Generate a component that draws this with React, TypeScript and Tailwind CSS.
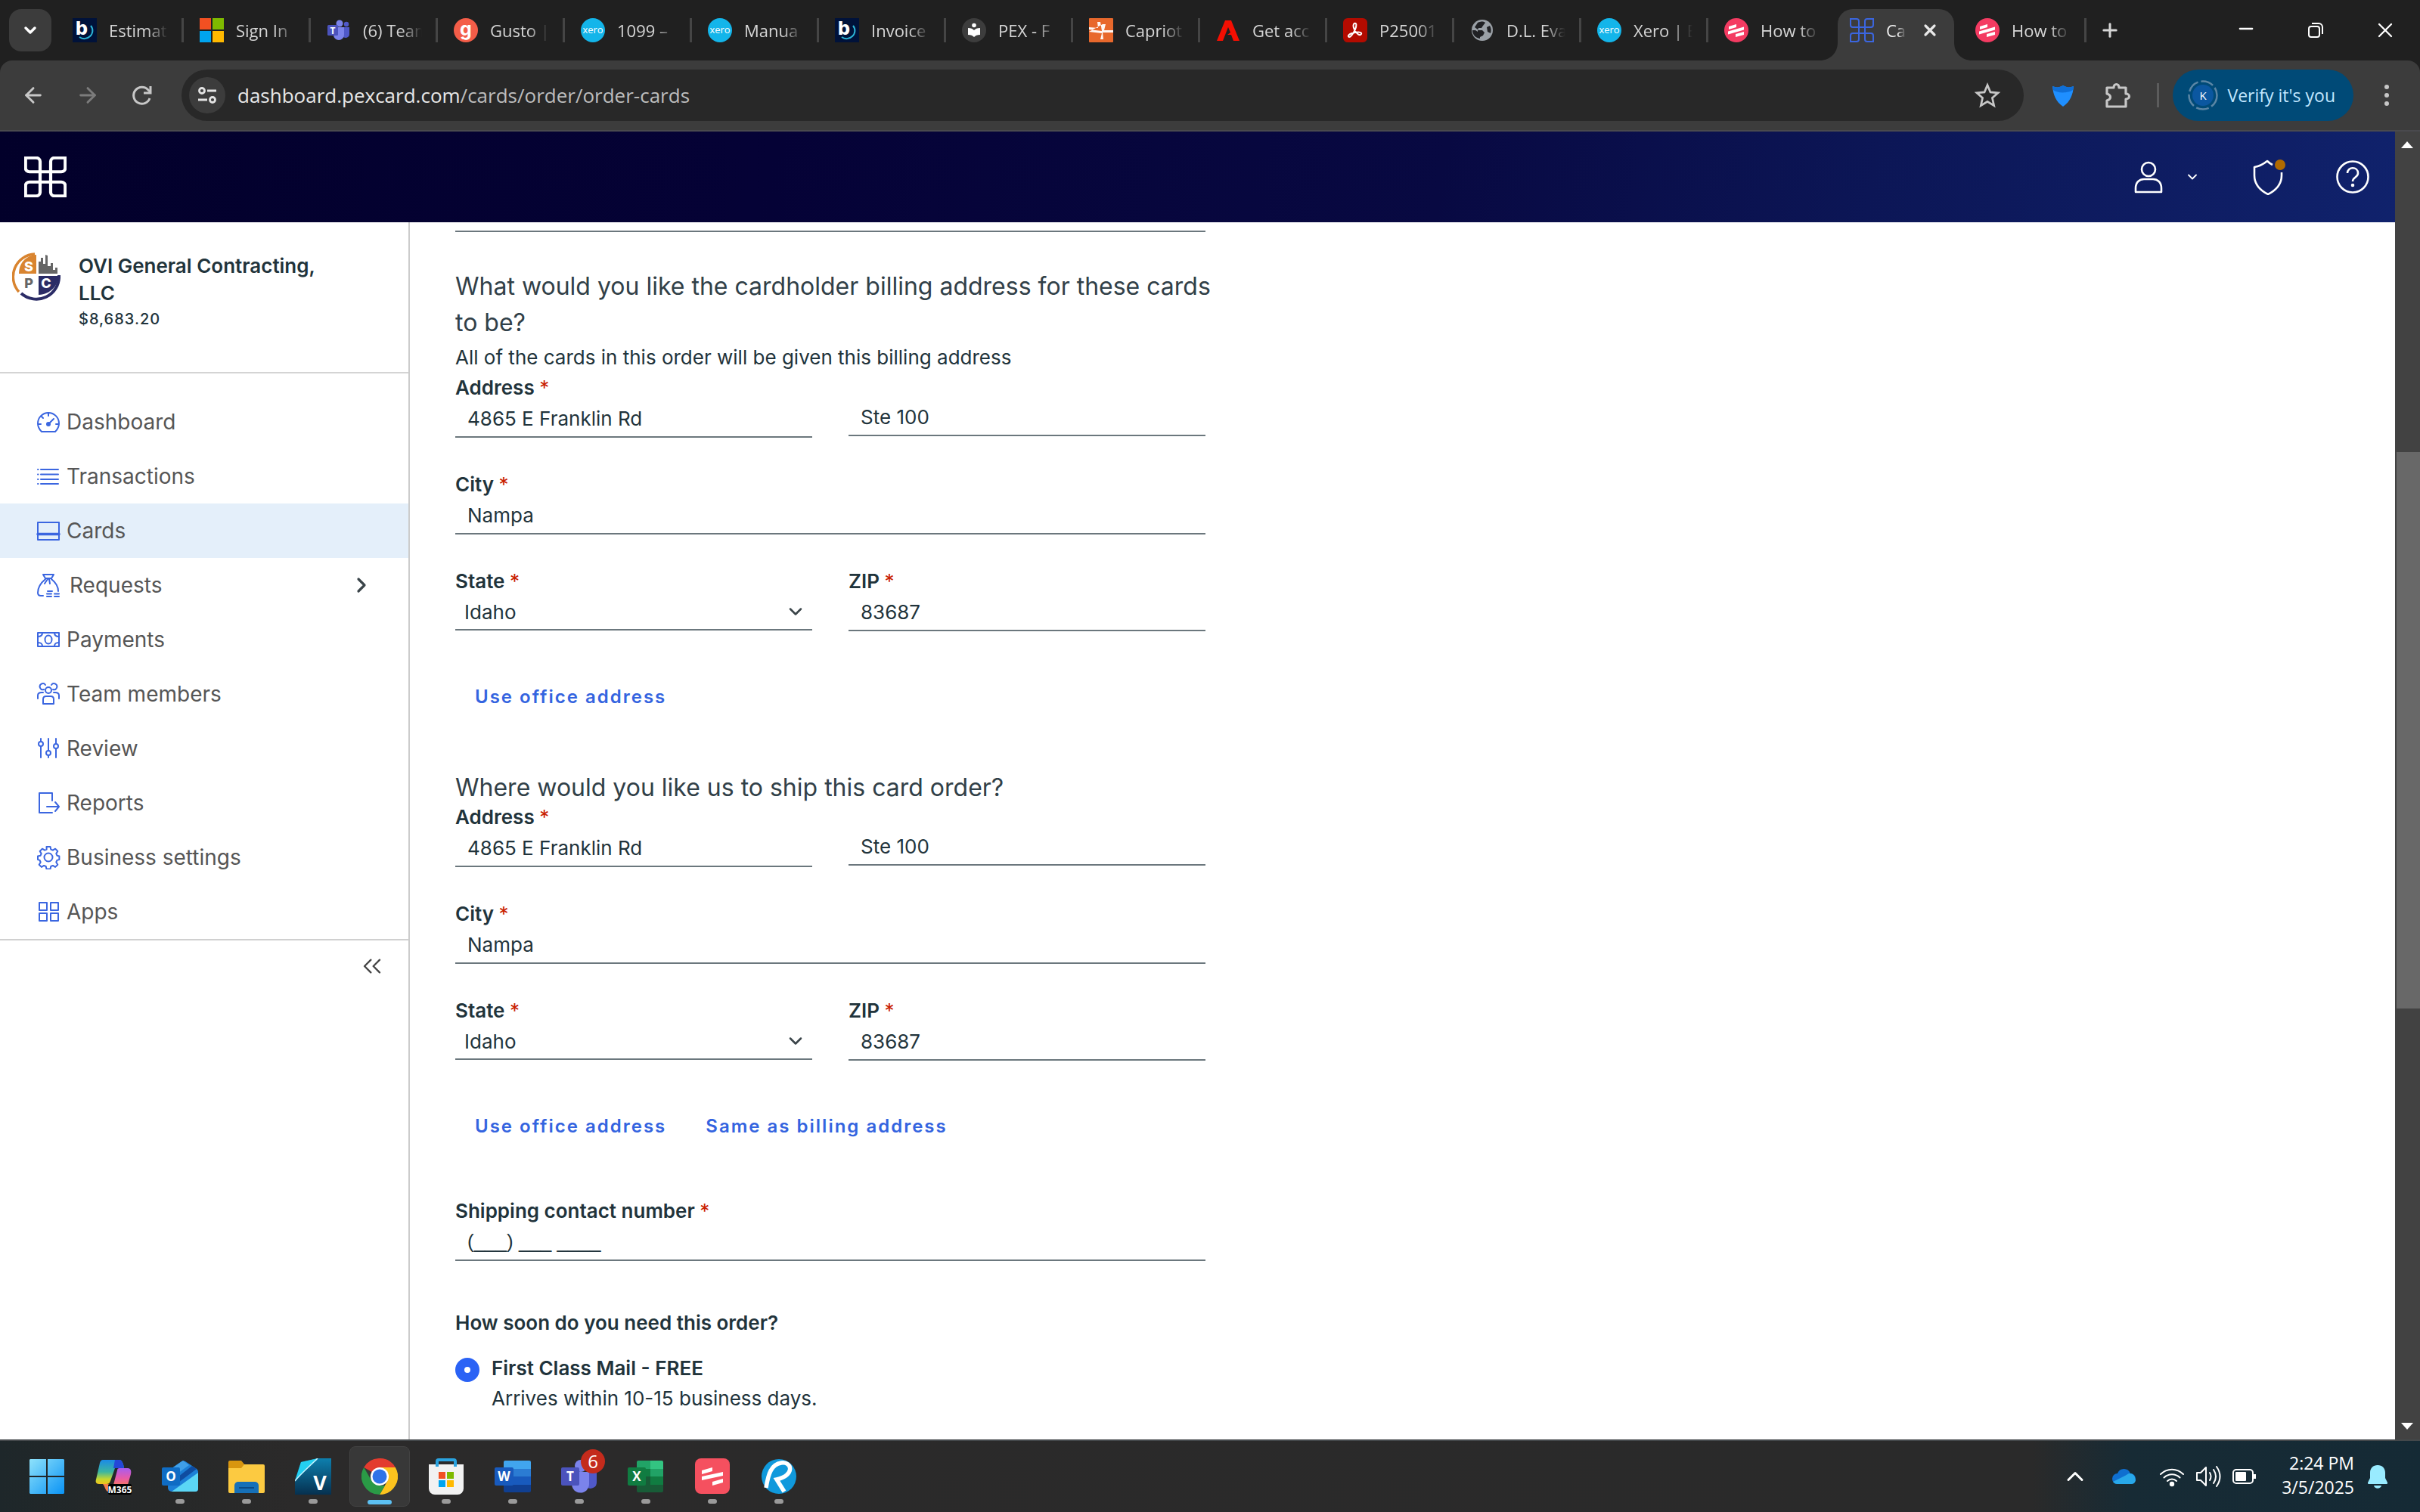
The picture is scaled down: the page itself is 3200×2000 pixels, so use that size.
import type { ReactNode } from "react";
import { ArrowLeft, ArrowRight, ChevronDown, ChevronRight, ChevronsLeft, ChevronUp, Minus, Plus, X } from "lucide-react";

const loops =
  "M12 12H4a3 3 0 0 1-3-3V1H9a3 3 0 0 1 3 3ZM20 12V4a3 3 0 0 1 3-3H31V9a3 3 0 0 1-3 3ZM20 20H28a3 3 0 0 1 3 3V31H23a3 3 0 0 1-3-3ZM12 20V28a3 3 0 0 1-3 3H1V23a3 3 0 0 1 3-3ZM12 12H20V20H12Z";

function PexMark({ className, width = 2 }: { className: string; width?: number }) {
  return (
    <svg viewBox="0 0 32 32" preserveAspectRatio="none" className={className} fill="none" stroke="currentColor" strokeWidth={width} aria-hidden="true">
      <path d={loops} />
    </svg>
  );
}

/* ---------- Tab icons ---------- */

function Fav({ children }: { children: ReactNode }) {
  return (
    <svg viewBox="0 0 32 32" className="size-8 shrink-0" aria-hidden="true">
      {children}
    </svg>
  );
}

const BFav = () => (
  <Fav>
    <rect width="32" height="32" fill="#00123a" />
    <text x="4" y="22" fontFamily="Inter, sans-serif" fontWeight="800" fontSize="25" fill="#fff">b</text>
    <path d="M24 10a10 10 0 0 1-1 14c-4 4-10 4-14 1" fill="none" stroke="#2bb6d8" strokeWidth="2" />
  </Fav>
);
const MicrosoftFav = () => (
  <Fav>
    <path fill="#f25022" d="M0 0h15v15H0z" />
    <path fill="#7fba00" d="M17 0h15v15H17z" />
    <path fill="#00a4ef" d="M0 17h15v15H0z" />
    <path fill="#ffb900" d="M17 17h15v15H17z" />
  </Fav>
);
const TeamsFav = () => (
  <Fav>
    <circle cx="17" cy="7" r="4.5" fill="#7b83eb" />
    <circle cx="26" cy="8" r="3.2" fill="#5059c9" />
    <path d="M21 12h9v9a5 5 0 0 1-9 3z" fill="#5059c9" />
    <path d="M9 12h14v10a7 7 0 0 1-14 0z" fill="#7b83eb" />
    <rect x="1" y="9" width="14" height="14" rx="1.5" fill="#4b53bc" />
    <text x="8" y="20.500" textAnchor="middle" fontFamily="Open Sans, sans-serif" fontWeight="700" fontSize="12" fill="#fff">T</text>
  </Fav>
);
const GustoFav = () => (
  <Fav>
    <circle cx="16" cy="16" r="16" fill="#f45d48" />
    <text x="16" y="23" textAnchor="middle" fontFamily="Inter, sans-serif" fontWeight="700" fontSize="25" fill="#fff">g</text>
  </Fav>
);
const XeroFav = () => (
  <Fav>
    <circle cx="16" cy="16" r="16" fill="#13b5ea" />
    <text x="16" y="20" textAnchor="middle" fontFamily="Open Sans, sans-serif" fontSize="13" fill="#fff">xero</text>
  </Fav>
);
const ReaderFav = () => (
  <Fav>
    <circle cx="16" cy="16" r="16" fill="#3d3d3d" />
    <circle cx="16" cy="9.500" r="2.800" fill="#fff" />
    <path d="M8 13c4 0 6 1 8 3 2-2 4-3 8-3v9c-4 0-6 1-8 3-2-2-4-3-8-3z" fill="#fff" />
  </Fav>
);
const CapriottiFav = () => (
  <Fav>
    <rect width="32" height="32" rx="1" fill="#e8682c" />
    <path d="M11 5h4l2 12-17-2v-3l12 1zM0 18l17 2-2 8h4l-1-9 14 0v-3l-12 0 2-8h-4z" fill="#fff" opacity=".95" />
  </Fav>
);
const AdobeFav = () => (
  <Fav>
    <path d="M12 3h8l11 27h-8l-3-8h-5l4-3-3-7-7 18H1z" fill="#f40f02" />
  </Fav>
);
const PdfFav = () => (
  <Fav>
    <rect width="32" height="32" rx="6" fill="#b30b00" />
    <path d="M15 7c3-1 3 3 1 8-2 4-5 10-8 10-3-1 0-5 8-6 6-1 9 0 8 2-1 3-7 0-9-6-2-4-2-7 0-8z" fill="none" stroke="#fff" strokeWidth="2" />
  </Fav>
);
const GlobeFav = () => (
  <Fav>
    <circle cx="16" cy="16" r="14" fill="#9aa0a6" />
    <path d="M10 6c4-2 8-2 10 0l-3 4-2 3h-4l-1 3h6l3 3-2 4-4 2v2c-6-1-10-5-10-11h4l3 2v-3l-4-3zM22 12l4-2c2 3 2 7 1 10l-4-2z" fill="#202124" />
  </Fav>
);
const StripesFav = () => (
  <Fav>
    <circle cx="16" cy="16" r="16" fill="#f43b62" />
    <g fill="#fff">
      <path d="M6 11l10-3v4L6 15z" />
      <path d="M5 17.500l21-6v4l-21 6z" />
      <path d="M15 21l11-3v4l-11 3z" />
    </g>
  </Fav>
);

const tabs: { title: string; icon: ReactNode }[] = [
  { title: "Estimat", icon: <BFav /> },
  { title: "Sign In", icon: <MicrosoftFav /> },
  { title: "(6) Team", icon: <TeamsFav /> },
  { title: "Gusto |", icon: <GustoFav /> },
  { title: "1099 –", icon: <XeroFav /> },
  { title: "Manua", icon: <XeroFav /> },
  { title: "Invoice", icon: <BFav /> },
  { title: "PEX - F", icon: <ReaderFav /> },
  { title: "Capriot", icon: <CapriottiFav /> },
  { title: "Get acc", icon: <AdobeFav /> },
  { title: "P25001", icon: <PdfFav /> },
  { title: "D.L. Eva", icon: <GlobeFav /> },
  { title: "Xero | E", icon: <XeroFav /> },
  { title: "How to", icon: <StripesFav /> },
];

function Tab({ title, icon, divider = true }: { title: string; icon: ReactNode; divider?: boolean }) {
  return (
    <button type="button" className="flex h-full w-[168px] min-w-0 items-center pl-5 text-left">
      {icon}
      <span className="ml-4 min-w-0 flex-1 overflow-hidden whitespace-nowrap [mask-image:linear-gradient(to_right,black_65%,transparent)]">{title}</span>
      <span className={divider ? "mr-px ml-[18px] h-8 w-[3px] shrink-0 bg-[#454545]" : "mr-px ml-[18px] h-8 w-[3px] shrink-0"} />
    </button>
  );
}

function TabStrip() {
  return (
    <div className="flex h-20 items-center bg-[#202020] pl-3 text-[22px] text-[#d6d6d6]">
      <button type="button" aria-label="Search tabs" className="mr-2 flex size-14 shrink-0 items-center justify-center rounded-2xl bg-[#3c3c3c] text-white">
        <ChevronDown className="size-6" strokeWidth={3.5} />
      </button>
      {tabs.map((t, i) => (
        <Tab key={i} title={t.title} icon={t.icon} divider={i !== tabs.length - 1} />
      ))}
      <div className="relative mr-2 ml-0.5 flex h-[68px] w-[154px] items-center self-end rounded-t-[20px] bg-[#3c3c3c] pl-4">
        <svg viewBox="0 0 24 24" className="absolute bottom-0 -left-6 size-6" aria-hidden="true"><path d="M24 0v24H0C14 24 24 14 24 0z" fill="#3c3c3c" /></svg>
        <svg viewBox="0 0 24 24" className="absolute -right-6 bottom-0 size-6" aria-hidden="true"><path d="M0 0v24h24C10 24 0 14 0 0z" fill="#3c3c3c" /></svg>
        <PexMark className="mb-3 size-8 shrink-0 text-[#3b66e0]" />
        <span className="mb-3 ml-4 w-[26px] overflow-hidden whitespace-nowrap text-[#eee] [mask-image:linear-gradient(to_right,black_60%,transparent)]">Ca</span>
        <button type="button" aria-label="Close tab" className="mb-3 ml-5 text-[#e8e8e8]">
          <X className="size-6" strokeWidth={3.2} />
        </button>
      </div>
      <Tab title="How to" icon={<StripesFav />} />
      <button type="button" aria-label="New tab" className="flex w-[60px] shrink-0 justify-center">
        <Plus className="size-7" strokeWidth={2.6} />
      </button>
      <div className="ml-auto flex shrink-0 text-white">
        <button type="button" aria-label="Minimize" className="flex w-[92px] justify-center"><Minus className="size-7" strokeWidth={2} /></button>
        <button type="button" aria-label="Restore" className="flex w-[92px] items-center justify-center">
          <svg viewBox="0 0 24 24" className="size-6" fill="none" stroke="currentColor" strokeWidth="2" aria-hidden="true">
            <rect x="3" y="7" width="14" height="14" rx="3" />
            <path d="M7 3h9a5 5 0 0 1 5 5v9" />
          </svg>
        </button>
        <button type="button" aria-label="Close" className="flex w-[92px] justify-center"><X className="size-8" strokeWidth={1.7} /></button>
      </div>
    </div>
  );
}

function Toolbar() {
  return (
    <div className="bg-[#202020]">
      <div className="flex h-[94px] items-center rounded-t-2xl border-b-2 border-[#4a4a4e] bg-[#3c3c3c] pl-2 text-[#c7c7c7]">
        <button type="button" aria-label="Back" className="flex w-[72px] justify-center"><ArrowLeft className="size-8" strokeWidth={2.2} /></button>
        <button type="button" aria-label="Forward" className="flex w-[72px] justify-center text-[#7c7c7c]"><ArrowRight className="size-8" strokeWidth={2.2} /></button>
        <button type="button" aria-label="Reload" className="flex w-[72px] justify-center">
          <svg viewBox="0 0 32 32" className="size-8" fill="none" stroke="currentColor" strokeWidth="3" aria-hidden="true">
            <path d="M26 20a11 11 0 1 1-2-11l3 3" />
            <path d="M27 4v9h-9" />
          </svg>
        </button>
        <div className="ml-4 flex h-[68px] min-w-0 flex-1 items-center rounded-full bg-[#282828] px-2.5">
          <button type="button" aria-label="Site information" className="flex size-12 shrink-0 items-center justify-center rounded-full bg-[#3c3c3c] text-[#e3e3e3]">
            <svg viewBox="0 0 28 28" className="size-7" fill="none" stroke="currentColor" strokeWidth="2.800" aria-hidden="true">
              <circle cx="7" cy="8" r="3.500" />
              <path d="M14 8h12M2 20h12" />
              <circle cx="21" cy="20" r="3.500" />
            </svg>
          </button>
          <div role="textbox" aria-label="Address bar" className="ml-4 flex-1 whitespace-nowrap text-[26px]">
            <span className="text-[#e8e8e8]">dashboard.pexcard.com</span>
            <span className="text-[#bdbdbd]">/cards/order/order-cards</span>
          </div>
          <button type="button" aria-label="Bookmark this tab" className="mr-5">
            <svg viewBox="0 0 32 32" className="size-9" fill="none" stroke="currentColor" strokeWidth="2.400" aria-hidden="true">
              <path d="M16 4l3.500 8.400 9 .8-6.800 6 2 9L16 23.500 8.300 28.200l2-9-6.800-6 9-.8z" />
            </svg>
          </button>
        </div>
        <button type="button" aria-label="Shield extension" className="ml-9 shrink-0">
          <svg viewBox="0 0 32 32" className="size-8" aria-hidden="true">
            <path d="M2 4c5 2 9 2 14-1 5 3 9 3 14 1-1 11-4 20-14 27C6 24 3 15 2 4z" fill="#1f8fff" />
            <path d="M2 4c5 2 9 2 14-1 5 3 9 3 14 1l-1 5c-5 4-20 5-26 0z" fill="#0f6fd8" />
          </svg>
        </button>
        <button type="button" aria-label="Extensions" className="ml-[38px] shrink-0">
          <svg viewBox="0 0 36 36" className="size-9" fill="none" stroke="currentColor" strokeWidth="3.200" strokeLinejoin="round" aria-hidden="true">
            <path d="M4 8h9c0-6 7-6 7 0h9v8c6 0 6 7 0 7v10H4v-8c6-2 6-7 0-9z" />
          </svg>
        </button>
        <span className="ml-[34px] h-8 w-[3px] shrink-0 bg-[#5c5c5c]" />
        <button type="button" className="ml-[18px] flex h-[68px] shrink-0 items-center rounded-full bg-[#004a77] pr-6 pl-5 text-[23px] text-[#c2e7ff]">
          <svg viewBox="0 0 40 40" className="mr-3 size-10" aria-hidden="true">
            <circle cx="20" cy="20" r="18.500" fill="none" stroke="#5b86a5" strokeWidth="2.500" strokeDasharray="17 4" />
            <circle cx="20" cy="20" r="14" fill="#0b57a0" />
            <text x="20" y="25.500" textAnchor="middle" fontFamily="Open Sans, sans-serif" fontSize="15" fill="#fff">K</text>
          </svg>
          Verify it's you
        </button>
        <button type="button" aria-label="Menu" className="flex w-[88px] shrink-0 justify-center">
          <svg viewBox="0 0 8 28" className="h-7 w-2" fill="currentColor" aria-hidden="true">
            <circle cx="4" cy="3" r="3" /><circle cx="4" cy="14" r="3" /><circle cx="4" cy="25" r="3" />
          </svg>
        </button>
      </div>
    </div>
  );
}

/* ---------- Application header and sidebar ---------- */

function AppHeader() {
  return (
    <header className="flex h-[120px] shrink-0 items-center bg-[linear-gradient(100deg,#02002a_0%,#050236_32%,#080942_60%,#0c1656_78%,#10226c_100%)] pl-8 text-white">
      <a href="#home" aria-label="PEX home"><PexMark className="h-[54px] w-14" width={2.4} /></a>
      <button type="button" aria-label="Account" className="ml-auto flex items-center">
        <svg viewBox="0 0 40 44" className="h-11 w-10" fill="none" stroke="currentColor" strokeWidth="2.600" strokeLinejoin="round" aria-hidden="true">
          <circle cx="20" cy="12" r="9" />
          <path d="M3 42v-5c0-8 5-12 11-12h12c6 0 11 4 11 12v5z" />
        </svg>
        <ChevronDown className="ml-7 size-5" strokeWidth={2.2} />
      </button>
      <button type="button" aria-label="Security" className="ml-[66px]">
        <svg viewBox="0 0 48 48" className="size-12" fill="none" aria-hidden="true">
          <path d="M30 7C28 6 25 4 23 2c-5 4-10 7-17 8v11c0 11 6 19 18 25 12-6 18-14 18-25v-4" stroke="currentColor" strokeWidth="2.600" strokeLinejoin="round" transform="translate(0 1)" />
          <circle cx="40" cy="8" r="7" fill="#b06a00" />
        </svg>
      </button>
      <button type="button" aria-label="Help" className="mr-8 ml-16">
        <svg viewBox="0 0 48 48" className="size-12" fill="none" stroke="currentColor" strokeWidth="2.600" aria-hidden="true">
          <circle cx="24" cy="24" r="20.500" />
          <path d="M17 19c0-9 14-9 14 0 0 6-7 5-7 11" />
          <circle cx="24" cy="35" r="1" fill="currentColor" />
        </svg>
      </button>
    </header>
  );
}

function NavIcon({ children }: { children: ReactNode }) {
  return (
    <svg viewBox="0 0 32 32" className="size-8 shrink-0 text-[#3b66e0]" fill="none" stroke="currentColor" strokeWidth="2" strokeLinecap="round" strokeLinejoin="round" aria-hidden="true">
      {children}
    </svg>
  );
}

const nav: { label: string; icon: ReactNode; active?: boolean; expandable?: boolean }[] = [
  {
    label: "Dashboard",
    icon: <NavIcon><path d="M7 29h18c3-3 5-7 5-11a14 14 0 1 0-28 0c0 4 2 8 5 11zM16 4v4M2 19h4M26 19h4M7 9l2 2M17 18l6-6" /><circle cx="16" cy="19" r="2" fill="currentColor" /></NavIcon>,
  },
  {
    label: "Transactions",
    icon: <NavIcon><path d="M6 7h23M6 13.500h23M6 20h23M6 26h23M2 7h.5M2 13.500h.5M2 20h.5M2 26h.5" /></NavIcon>,
  },
  {
    label: "Cards",
    active: true,
    icon: <NavIcon><rect x="2" y="5" width="28" height="23" /><path d="M2 20.500h28" strokeWidth="3.500" /></NavIcon>,
  },
  {
    label: "Requests",
    expandable: true,
    icon: <NavIcon><path d="M9 2h14l-3 5h-8zM12 8C6 13 2 20 2 26c0 3 1 4 4 4h3M20 8c5 4 9 10 9 16M15 8l-4 6M17 8l1 6M15 24h6M14 27.500h6M14 31h6M24 27.500h6M24 31h6" /></NavIcon>,
  },
  {
    label: "Payments",
    icon: <NavIcon><rect x="2" y="7" width="28" height="18" /><ellipse cx="16" cy="16" rx="4.500" ry="5.500" /><path d="M8 7c0 4-2 5-6 5M24 7c0 4 2 5 6 5M8 25c0-4-2-5-6-5M24 25c0-4 2-5 6-5" /></NavIcon>,
  },
  {
    label: "Team members",
    icon: <NavIcon><circle cx="16" cy="11" r="4" /><path d="M9 29v-6c0-3 2-4 4-4h6c2 0 4 1 4 4v6zM10 10a4 4 0 1 1 2-6M22 10a4 4 0 1 0-2-6M2 22v-4c0-3 2-4 5-4h2M30 22v-4c0-3-2-4-5-4h-2" /></NavIcon>,
  },
  {
    label: "Review",
    icon: <NavIcon><path d="M6 3v3M6 13v15M16 3v16M16 26v2M26 3v7M26 16v12" /><circle cx="6" cy="10" r="3" /><circle cx="16" cy="22" r="3" /><circle cx="26" cy="13" r="3" /></NavIcon>,
  },
  {
    label: "Reports",
    icon: <NavIcon><path d="M21 13V3H4v26h17M14 21h16M25 15l5 6-5 6" /></NavIcon>,
  },
  {
    label: "Business settings",
    icon: (
      <NavIcon>
        <circle cx="16" cy="16" r="5.500" />
        <path d="M13.500 2h5l.8 3.600 2.600 1.100 3.200-2 3.200 3.200-2 3.200 1.100 2.600 3 .8v4.600l-3 .8-1.100 2.600 2 3.200-3.200 3.200-3.200-2-2.600 1.100-.8 3.400h-5l-.8-3.400-2.600-1.100-3.200 2-3.200-3.200 2-3.200-1.100-2.600L2 19.100v-4.600l3.600-.8 1.100-2.600-2-3.200 3.200-3.200 3.200 2 2.600-1.100z" />
      </NavIcon>
    ),
  },
  {
    label: "Apps",
    icon: <NavIcon><rect x="4" y="4" width="10" height="10" /><rect x="19" y="4" width="10" height="10" /><rect x="4" y="18" width="10" height="10" /><rect x="19" y="18" width="10" height="10" /></NavIcon>,
  },
];

function CompanyLogo() {
  return (
    <svg viewBox="0 0 64 64" className="size-16 shrink-0" aria-hidden="true">
      <path d="M30 2A30 30 0 0 0 9 52" fill="none" stroke="#d9842f" strokeWidth="3.500" />
      <path d="M12 54a30 30 0 0 0 50-24" fill="none" stroke="#2b2c66" strokeWidth="4" />
      <path d="M32 3v25H9C9 14 18 4 32 3z" fill="#d9842f" />
      <path d="M35 28V12h3V7h3v8h3V3l3 1v14h4v-4h3v9h3v-3h3v8z" fill="#666" />
      <path d="M35 31h26c0 13-10 24-26 25z" fill="#2b2c66" />
      <g fontFamily="Inter, sans-serif" fontWeight="800" fontSize="18">
        <text x="22" y="25" textAnchor="middle" fill="#fff">S</text>
        <text x="22" y="47" textAnchor="middle" fill="#666">P</text>
        <text x="45" y="47" textAnchor="middle" fill="#fff">C</text>
      </g>
    </svg>
  );
}

function Sidebar() {
  return (
    <aside className="w-[542px] shrink-0 border-r-2 border-[#cccccc] bg-white">
      <div className="flex h-[200px] gap-6 border-b-2 border-[#d4d4d4] pt-10 pr-24 pl-4">
        <CompanyLogo />
        <div className="text-[#21333b]">
          <p className="text-[26px] leading-9 font-semibold">OVI General Contracting, LLC</p>
          <p className="text-[20px] leading-8 font-medium tracking-[1px]">$8,683.20</p>
        </div>
      </div>
      <nav className="border-b-2 border-[#d0d0d0] pt-7">
        {nav.map((n) => (
          <a
            key={n.label}
            href={"#" + n.label.toLowerCase().replace(" ", "-")}
            aria-current={n.active ? "page" : undefined}
            className={
              n.active
                ? "flex h-[72px] items-center gap-2 bg-[#e4effa] pl-12 text-[28px] text-[#565656]"
                : n.expandable
                  ? "flex h-[72px] items-center gap-3 pl-12 text-[28px] text-[#565656]"
                  : "flex h-[72px] items-center gap-2 pl-12 text-[28px] text-[#565656]"
            }
          >
            {n.icon}
            {n.label}
            {n.expandable && <ChevronRight className="mr-[46px] ml-auto size-8 text-[#3a4449]" strokeWidth={2.4} />}
          </a>
        ))}
      </nav>
      <div className="flex justify-end pt-3.5 pr-7">
        <button type="button" aria-label="Collapse sidebar"><ChevronsLeft className="size-10 text-[#454545]" strokeWidth={1.4} /></button>
      </div>
    </aside>
  );
}

/* ---------- Order form ---------- */

const inputClass = "block h-12 w-full rounded-none border-b-2 border-[#6b777d] bg-transparent px-4 pb-0.5 text-[26px] text-[#21333b] outline-none";

function Label({ htmlFor, children }: { htmlFor: string; children: ReactNode }) {
  return (
    <label htmlFor={htmlFor} className="block text-[26px] leading-9 font-semibold text-[#21333b]">
      {children} <span className="font-normal text-[#c92100]">*</span>
    </label>
  );
}

function AddressFields({ id }: { id: string }) {
  return (
    <div className="grid grid-cols-2 gap-x-12 gap-y-11">
      <div>
        <Label htmlFor={id + "-address"}>Address</Label>
        <input id={id + "-address"} className={inputClass} defaultValue="4865 E Franklin Rd" />
      </div>
      <div className="pt-[34px]">
        <input aria-label="Address line 2" className={inputClass} defaultValue="Ste 100" />
      </div>
      <div className="col-span-2">
        <Label htmlFor={id + "-city"}>City</Label>
        <input id={id + "-city"} className={inputClass} defaultValue="Nampa" />
      </div>
      <div>
        <Label htmlFor={id + "-state"}>State</Label>
        <div className="relative">
          <select id={id + "-state"} defaultValue="Idaho" className="block h-[47px] w-full appearance-none border-b-2 border-[#6b777d] bg-transparent px-3 text-[26px] text-[#21333b] outline-none">
            <option>Idaho</option>
          </select>
          <ChevronDown className="pointer-events-none absolute top-2 right-2 size-7 text-[#3a4449]" strokeWidth={2.2} />
        </div>
      </div>
      <div>
        <Label htmlFor={id + "-zip"}>ZIP</Label>
        <input id={id + "-zip"} className={inputClass} defaultValue="83687" />
      </div>
    </div>
  );
}

function LinkButton({ children }: { children: ReactNode }) {
  return <button type="button" className="h-12 px-[26px] text-[24px] font-semibold tracking-[2px] text-[#3464e0]">{children}</button>;
}

function OrderForm() {
  return (
    <main className="min-w-0 flex-1 overflow-hidden bg-white pl-[60px]">
      <form className="w-full max-w-[992px] text-[#21333b]">
        <div className="-mt-[35px]">
          <input aria-label="Order name" className={inputClass} />
        </div>
        <section className="pt-12">
          <h2 className="-mr-4 text-[32px] leading-[48px] text-[#314048]">What would you like the cardholder billing address for these cards to be?</h2>
          <p className="mt-0.5 mb-0.5 text-[26px] leading-10">All of the cards in this order will be given this billing address</p>
          <AddressFields id="billing" />
          <div className="mt-[63px] flex"><LinkButton>Use office address</LinkButton></div>
        </section>
        <section className="pt-[75px]">
          <h2 className="text-[32px] leading-[42px] text-[#314048]">Where would you like us to ship this card order?</h2>
          <AddressFields id="shipping" />
          <div className="mt-[63px] flex">
            <LinkButton>Use office address</LinkButton>
            <LinkButton>Same as billing address</LinkButton>
          </div>
        </section>
        <section className="pt-[70px]">
          <Label htmlFor="phone">Shipping contact number</Label>
          <input id="phone" className={inputClass + " font-['Liberation_Sans',sans-serif]"} defaultValue="(___) ___ ____" />
        </section>
        <fieldset className="mt-16">
          <legend className="text-[26px] leading-9 font-semibold">How soon do you need this order?</legend>
          <div className="mt-6 flex items-end gap-4">
            <input id="first-class" type="radio" name="speed" defaultChecked className="size-8 appearance-none rounded-full border-[12px] border-[#2a62f5] bg-white" />
            <label htmlFor="first-class" className="text-[26px] leading-9 font-semibold">First Class Mail - FREE</label>
          </div>
          <p className="pl-12 text-[26px] leading-[44px]">Arrives within 10-15 business days.</p>
        </fieldset>
      </form>
    </main>
  );
}

function Scrollbar() {
  return (
    <div className="flex w-[33px] shrink-0 flex-col bg-[#424242]" aria-hidden="true">
      <svg viewBox="0 0 33 34" className="h-[34px] w-full"><path d="M8 22l8-9 8 9z" fill="#fff" /></svg>
      <div className="flex-[390]" />
      <div className="ml-0.5 flex-[736] bg-[#686868]" />
      <div className="flex-[536]" />
      <svg viewBox="0 0 33 34" className="h-[34px] w-full"><path d="M8 12l8 9 8-9z" fill="#fff" /></svg>
    </div>
  );
}

/* ---------- Taskbar ---------- */

function TaskSvg({ children }: { children: ReactNode }) {
  return <svg viewBox="0 0 48 48" className="size-12" aria-hidden="true">{children}</svg>;
}

const letter = { textAnchor: "middle" as const, fontFamily: "Open Sans, sans-serif", fontWeight: 700, fill: "#fff" };

const apps: { name: string; icon: ReactNode; state?: "open" | "active"; badge?: string }[] = [
  {
    name: "Start",
    icon: (
      <TaskSvg>
        <defs><linearGradient id="win" x1="0" y1="0" x2="1" y2="1"><stop offset="0" stopColor="#8ee2fb" /><stop offset="1" stopColor="#0a93f5" /></linearGradient></defs>
        <path d="M2 1h21v22H1V2zM25 1h21l1 1v21H25zM1 25h22v22H2l-1-1zM25 25h22v21l-1 1H25z" fill="url(#win)" />
      </TaskSvg>
    ),
  },
  {
    name: "Microsoft 365",
    icon: (
      <TaskSvg>
        <defs>
          <linearGradient id="ma" x1="0" y1="0" x2="0" y2="1"><stop offset="0" stopColor="#1b8ae8" /><stop offset=".5" stopColor="#3cb6a0" /><stop offset=".8" stopColor="#c6d72e" /><stop offset="1" stopColor="#f2c21c" /></linearGradient>
          <linearGradient id="mb" x1="0" y1="0" x2="0" y2="1"><stop offset="0" stopColor="#a85cf0" /><stop offset=".6" stopColor="#e85aa8" /><stop offset="1" stopColor="#f5746a" /></linearGradient>
        </defs>
        <path d="M10 2h22c3 0 5 4 6 11h-12l-6 17c-1 3-3 4-5 4H5c-4 0-5-3-4-6l5-22c1-3 2-4 4-4z" fill="url(#ma)" />
        <path d="M26 2h6c3 0 5 4 6 11H24z" fill="#2547d8" />
        <path d="M32 13h11c4 0 5 4 4 8l-4 14H24l5-19c0-2 1-3 3-3z" fill="url(#mb)" />
        <path d="M10 34h12l-5 10c-4-1-4-7-7-10z" fill="#f57d4a" />
        <rect x="17" y="34" width="31" height="14" rx="2" fill="#000" />
        <text x="32.500" y="45.500" fontSize="12" {...letter}>M365</text>
      </TaskSvg>
    ),
  },
  {
    name: "Outlook",
    state: "open",
    icon: (
      <TaskSvg>
        <path d="M9 16L26 4c2-1 3-1 5 0l15 10c1 1 2 2 2 4v22a4 4 0 0 1-4 4H13a5 5 0 0 1-5-5z" fill="#1c7fd6" />
        <path d="M12 14L28 3l8 6-22 16z" fill="#3f9fe8" />
        <path d="M46 14L22 32v-8L40 10z" fill="#0f4ca0" />
        <path d="M48 19v21a4 4 0 0 1-4 4H13z" fill="#5bd6f5" />
        <rect y="12" width="24" height="24" rx="2" fill="#0f6cc4" />
        <text x="12" y="30" fontSize="17" {...letter}>O</text>
      </TaskSvg>
    ),
  },
  {
    name: "File Explorer",
    state: "open",
    icon: (
      <TaskSvg>
        <path d="M0 5a2 2 0 0 1 2-2h15l5 6v6H0z" fill="#d9960f" />
        <path d="M0 13h17l4-5h25a2 2 0 0 1 2 2v34a2 2 0 0 1-2 2H2a2 2 0 0 1-2-2z" fill="#fcca41" />
        <path d="M8 46V36a5 5 0 0 1 5-5h22a5 5 0 0 1 5 5v10z" fill="#1670b8" />
        <path d="M14 39h20" stroke="#0b4a85" strokeWidth="2" />
      </TaskSvg>
    ),
  },
  {
    name: "Vista viewer",
    state: "open",
    icon: (
      <TaskSvg>
        <defs><linearGradient id="v" x1="0" y1="0" x2="0" y2="1"><stop offset="0" stopColor="#0d7fae" /><stop offset="1" stopColor="#06304f" /></linearGradient></defs>
        <path d="M8 5L30 0h18v48H0V28z" fill="url(#v)" />
        <path d="M8 5L30 0C20 10 8 20 0 30z" fill="#23d0f2" />
        <path d="M30 0C20 10 8 20 0 30" stroke="#c9f5ff" strokeWidth="1.500" fill="none" />
        <text x="33" y="42" fontSize="27" {...letter}>V</text>
      </TaskSvg>
    ),
  },
  {
    name: "Chrome",
    state: "active",
    icon: (
      <TaskSvg>
        <path d="M24 24L3.200 12A24 24 0 0 1 44.800 12z" fill="#e33b2e" />
        <path d="M24 12h20.800A24 24 0 0 1 24 48l10.400-18z" fill="#fcc31e" />
        <path d="M3.200 12l10.400 18L24 36h7L24 48A24 24 0 0 1 3.200 12z" fill="#2a9a46" />
        <circle cx="24" cy="24" r="12" fill="#fff" />
        <circle cx="24" cy="24" r="9.500" fill="#2f73e8" />
      </TaskSvg>
    ),
  },
  {
    name: "Microsoft Store",
    state: "open",
    icon: (
      <TaskSvg>
        <path d="M1 8h46v32a8 8 0 0 1-8 8H9a8 8 0 0 1-8-8z" fill="#f2f2f2" />
        <path d="M12 11V4a2 2 0 0 1 2-2h20a2 2 0 0 1 2 2v7" fill="none" stroke="#2aa3e0" strokeWidth="4" />
        <path d="M14 18h9v9h-9z" fill="#f25022" /><path d="M25 18h9v9h-9z" fill="#7fba00" />
        <path d="M14 29h9v9h-9z" fill="#00a4ef" /><path d="M25 29h9v9h-9z" fill="#ffb900" />
      </TaskSvg>
    ),
  },
  {
    name: "Word",
    state: "open",
    icon: (
      <TaskSvg>
        <path d="M12 5a2 2 0 0 1 2-2h32a2 2 0 0 1 2 2v9H12z" fill="#41a5ee" /><path d="M12 14h36v10H12z" fill="#2b7cd3" />
        <path d="M12 24h36v11H12z" fill="#185abd" /><path d="M12 35h36v8a2 2 0 0 1-2 2H14a2 2 0 0 1-2-2z" fill="#103f91" />
        <rect y="12" width="25" height="24" rx="2" fill="#185abd" />
        <text x="12.500" y="30" fontSize="17" {...letter}>W</text>
      </TaskSvg>
    ),
  },
  {
    name: "Teams",
    state: "open",
    badge: "6",
    icon: (
      <TaskSvg>
        <circle cx="26" cy="10" r="8" fill="#7b83eb" /><circle cx="40" cy="12" r="5" fill="#5059c9" />
        <path d="M32 18h15v13a8 8 0 0 1-13 7z" fill="#5059c9" /><path d="M14 18h23v16a11 11 0 0 1-23 0z" fill="#7b83eb" />
        <rect y="12" width="24" height="24" rx="2" fill="#4b53bc" />
        <text x="12" y="30" fontSize="17" {...letter}>T</text>
      </TaskSvg>
    ),
  },
  {
    name: "Excel",
    state: "open",
    icon: (
      <TaskSvg>
        <path d="M12 5a2 2 0 0 1 2-2h16v11H12z" fill="#21a366" /><path d="M30 3h15a2 2 0 0 1 2 2v9H30z" fill="#33c481" />
        <path d="M12 14h18v10H12zM30 24h17v11H30z" fill="#107c41" /><path d="M30 14h17v10H30z" fill="#21a366" />
        <path d="M12 24h18v11H12zM12 35h35v8a2 2 0 0 1-2 2H14a2 2 0 0 1-2-2z" fill="#185c37" />
        <rect y="12" width="24" height="24" rx="2" fill="#107c41" />
        <text x="12" y="30" fontSize="17" {...letter}>X</text>
      </TaskSvg>
    ),
  },
  {
    name: "Ramp",
    state: "open",
    icon: (
      <TaskSvg>
        <rect x="1" width="46" height="47" rx="8" fill="#f5505f" />
        <g fill="#fff"><path d="M10 16l14-4v5l-14 4z" /><path d="M10 24l28-6v5l-28 6z" /><path d="M24 31l14-4v5l-14 4z" /></g>
      </TaskSvg>
    ),
  },
  {
    name: "Revu",
    state: "open",
    icon: (
      <TaskSvg>
        <circle cx="24" cy="24" r="23" fill="#1099dc" />
        <path d="M7 39C10 20 14 8 27 6c15-2 18 17-6 22l10 16" fill="none" stroke="#fff" strokeWidth="5.500" />
      </TaskSvg>
    ),
  },
];

function Taskbar() {
  return (
    <footer className="flex h-24 shrink-0 items-center border-t-2 border-[#44484b] bg-[linear-gradient(90deg,#1e272a_0%,#262828_6%,#2b2a2a_12%,#2a2a2a_84%,#172b35_88%,#152a35_100%)] pl-[22px]">
      {apps.map((a) => (
        <button
          key={a.name}
          type="button"
          aria-label={a.name}
          className={a.state === "active" ? "relative mr-2 flex size-20 items-center justify-center rounded-lg border border-[#424242] bg-[#383838]" : "relative mr-2 flex size-20 items-center justify-center"}
        >
          {a.icon}
          {a.state === "open" && <span className="absolute bottom-1 h-1.5 w-3 rounded-full bg-[#9a9a9a]" />}
          {a.state === "active" && <span className="absolute bottom-0.5 h-1.5 w-8 rounded-full bg-[#5cc0f2]" />}
          {a.badge && <span className="absolute top-1 right-1.5 flex size-8 items-center justify-center rounded-full bg-[#c42b1c] font-[Open_Sans] text-[24px] leading-8 text-white">{a.badge}</span>}
        </button>
      ))}
      <div className="ml-auto flex items-center pr-8 text-white">
        <button type="button" aria-label="Show hidden icons" className="flex w-16 justify-center"><ChevronUp className="size-9" strokeWidth={2} /></button>
        <button type="button" aria-label="OneDrive" className="mr-2 flex w-16 justify-center">
          <svg viewBox="0 0 32 24" className="h-6 w-8" aria-hidden="true">
            <path d="M8 22a7 7 0 0 1 0-14A9 9 0 0 1 25 8a7 7 0 0 1 0 14z" fill="#0f6fd0" />
            <path d="M2 19L18 11l5-3a7 7 0 0 1 8 5l1 4a6 6 0 0 1-6 5H8a7 7 0 0 1-6-3z" fill="#28a8ea" />
          </svg>
        </button>
        <button type="button" aria-label="Network" className="flex w-12 justify-center">
          <svg viewBox="0 0 32 28" className="h-7 w-8" fill="none" stroke="currentColor" strokeWidth="2" strokeLinecap="round" aria-hidden="true">
            <path d="M1 11a21 21 0 0 1 30 0M5.500 15.500a15 15 0 0 1 21 0M10 20a8.500 8.500 0 0 1 12 0" /><circle cx="16" cy="24" r="2.200" fill="currentColor" />
          </svg>
        </button>
        <button type="button" aria-label="Volume" className="flex w-12 justify-center">
          <svg viewBox="0 0 34 32" className="h-8 w-[34px]" fill="none" stroke="currentColor" strokeWidth="2" strokeLinecap="round" strokeLinejoin="round" aria-hidden="true">
            <path d="M2 11h5l7-7v24l-7-7H2zM19 11q3 5 0 10M24 7q6 9 0 18M28 3q9 13 0 26" />
          </svg>
        </button>
        <button type="button" aria-label="Battery" className="flex w-12 justify-center">
          <svg viewBox="0 0 34 24" className="h-6 w-[34px]" fill="none" aria-hidden="true">
            <rect x="2" y="3" width="26" height="18" rx="4" stroke="currentColor" strokeWidth="2" /><rect x="5" y="6" width="14" height="12" rx="1" fill="currentColor" /><path d="M29 9h3v6h-3z" fill="currentColor" />
          </svg>
        </button>
        <button type="button" className="mr-[7px] w-[121px] pb-1 text-right text-[23px] leading-8 whitespace-nowrap">
          2:24 PM
          <br />
          3/5/2025
        </button>
        <button type="button" aria-label="Notifications" className="flex w-12 justify-center">
          <svg viewBox="0 0 28 32" className="h-8 w-7" fill="#99ebff" aria-hidden="true">
            <path d="M14 1c6 0 10 4 10 10v7l3 6c0 1 0 2-1 2H2c-1 0-1-1-1-2l3-6v-7C4 5 8 1 14 1z" /><path d="M9 28h10c-1 5-9 5-10 0z" />
          </svg>
        </button>
      </div>
    </footer>
  );
}

export default function App() {
  return (
    <div className="flex h-screen flex-col overflow-hidden font-['Open_Sans','Noto_Sans',sans-serif]">
      <TabStrip />
      <Toolbar />
      <div className="flex min-h-0 flex-1 font-['Inter','Noto_Sans',sans-serif]">
        <div className="flex min-w-0 flex-1 flex-col">
          <AppHeader />
          <div className="flex min-h-0 flex-1">
            <Sidebar />
            <OrderForm />
          </div>
        </div>
        <Scrollbar />
      </div>
      <Taskbar />
    </div>
  );
}
